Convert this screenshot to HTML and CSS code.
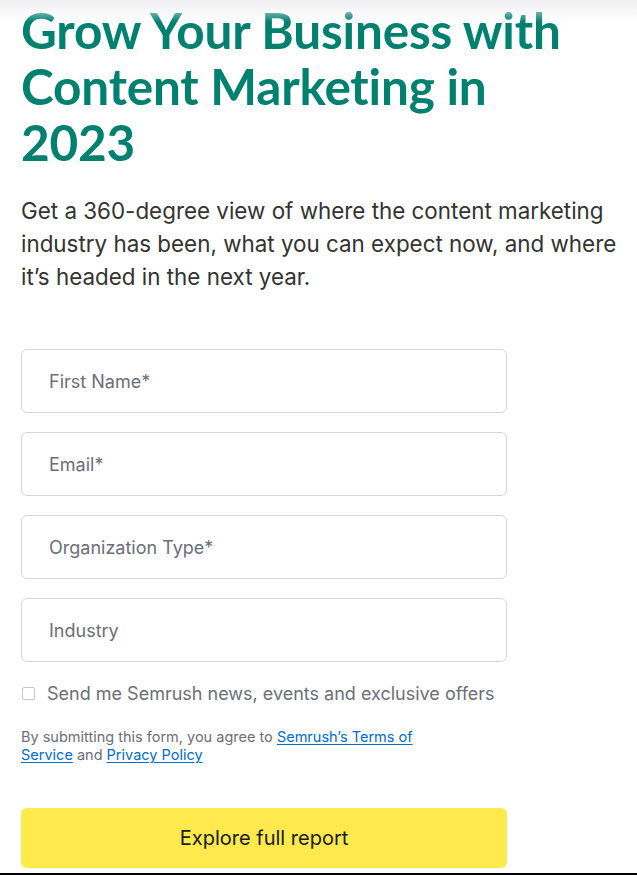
FILE: index.html
```html
<!DOCTYPE html>
<html lang="en">
<head>
<meta charset="utf-8">
<title>Grow Your Business with Content Marketing in 2023</title>
<link rel="stylesheet" href="styles.css">
</head>
<body>
<div class="topshade"></div>
<main class="page">
  <h1 class="title">Grow Your Business with Content Marketing in 2023</h1>
  <p class="lead">Get a 360-degree view of where the content marketing industry has been, what you can expect now, and where it’s headed in the next year.</p>
  <form class="form">
    <div class="fields">
      <input class="field" type="text" placeholder="First Name*">
      <input class="field" type="text" placeholder="Email*">
      <input class="field" type="text" placeholder="Organization Type*">
      <input class="field" type="text" placeholder="Industry">
    </div>
    <label class="check">
      <span class="box"></span>
      <span class="check-text">Send me Semrush news, events and exclusive offers</span>
    </label>
    <p class="legal">By submitting this form, you agree to <a href="#">Semrush’s Terms of Service</a> and <a href="#">Privacy Policy</a></p>
    <button class="submit" type="button">Explore full report</button>
  </form>
</main>
<div class="bottomline"></div>
</body>
</html>
```
FILE: styles.css
```css
html, body {
  margin: 0;
  padding: 0;
  background: #fff;
}
body {
  width: 637px;
  height: 875px;
  overflow: hidden;
  position: relative;
  font-family: Inter, "Noto Sans", sans-serif;
}
.topshade {
  position: absolute;
  top: 0;
  left: 0;
  right: 0;
  height: 22px;
  background: linear-gradient(#f0f0f3, rgba(255,255,255,0));
}
.page {
  padding: 0 0 0 21px;
}
.title {
  margin: 0;
  padding-top: 2px;
  width: 560px;
  font-family: Lato, sans-serif;
  font-weight: 700;
  font-size: 49.5px;
  line-height: 56px;
  letter-spacing: -0.2px;
  font-variant-ligatures: none;
  color: #00806f;
}
.lead {
  margin: 24px 0 0;
  width: 606px;
  font-size: 22.4px;
  line-height: 33px;
  color: #333;
}
.form {
  margin-top: 56px;
  width: 486px;
}
.fields {
  display: flex;
  flex-direction: column;
  gap: 19px;
}
.field {
  box-sizing: border-box;
  width: 486px;
  height: 64px;
  border: 1px solid #d6d7dc;
  border-radius: 6px;
  padding: 0 27px;
  font-family: Inter, sans-serif;
  font-size: 18px;
  color: #171a22;
  outline: none;
}
.field::placeholder {
  color: #6c6e79;
}
.check {
  display: flex;
  align-items: center;
  gap: 12px;
  margin-top: 21px;
  padding-left: 1px;
}
.box {
  box-sizing: border-box;
  width: 13px;
  height: 13px;
  border: 1px solid #c4c6cc;
  border-radius: 2px;
  background: #fff;
}
.check-text {
  font-size: 18px;
  color: #6c6e79;
  white-space: nowrap;
}
.legal {
  margin: 24px 0 0;
  width: 420px;
  font-size: 14.5px;
  line-height: 18px;
  color: #6c6e79;
}
.legal a {
  color: #006dca;
  text-decoration: underline;
  text-underline-offset: 2px;
}
.submit {
  display: block;
  margin-top: 44px;
  width: 486px;
  height: 60px;
  border: 0;
  border-radius: 6px;
  background: #ffe94d;
  font-family: Inter, sans-serif;
  font-size: 20px;
  color: #171a22;
}
.bottomline {
  position: absolute;
  left: 0;
  right: 0;
  top: 873px;
  height: 2px;
  background: #000;
}
```
